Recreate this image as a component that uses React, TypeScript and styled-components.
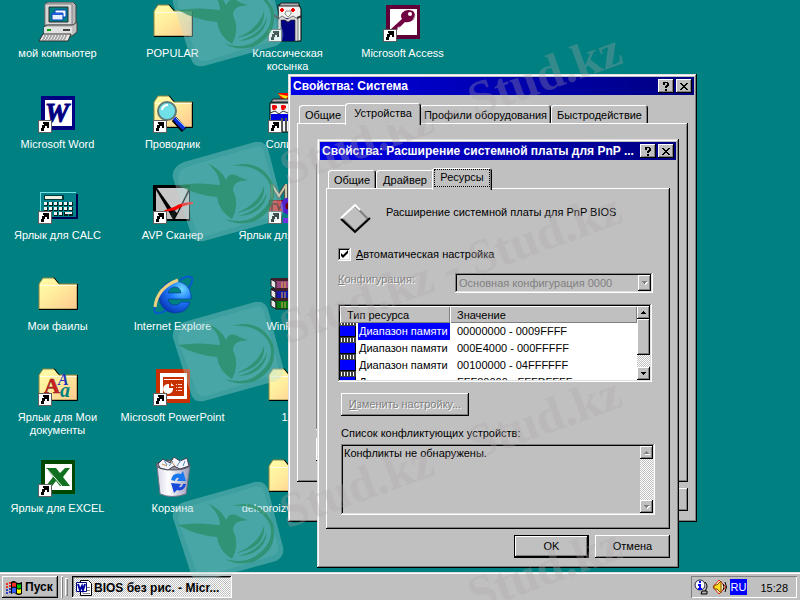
import React from "react";
import styled, { createGlobalStyle, css } from "styled-components";

const GlobalStyle = createGlobalStyle`
  * { box-sizing: border-box; }
  html, body { margin: 0; padding: 0; }
  body {
    background: #008080;
    font-family: "Liberation Sans", Arial, sans-serif;
    font-size: 11px;
    line-height: 13px;
    color: #000;
    overflow: hidden;
  }
  button, input, select, textarea { font: inherit; color: inherit; margin: 0; }
`;

const raised = css`
  box-shadow: inset -1px -1px #000, inset 1px 1px #fff, inset -2px -2px #808080;
`;
const sunken = css`
  box-shadow: inset -1px -1px #fff, inset 1px 1px #808080, inset -2px -2px #dfdfdf, inset 2px 2px #000;
`;
const dither = css`
  background: repeating-conic-gradient(#fff 0 25%, #c0c0c0 0 50%) 0 0 / 2px 2px;
`;

const Screen = styled.div`
  position: relative;
  min-height: 100vh;
  display: flex;
  flex-direction: column;
  overflow: hidden;
`;

const Workspace = styled.main`
  position: relative;
  flex: 1;
`;

const IconGrid = styled.div`
  display: grid;
  grid-template-columns: repeat(4, 115px);
  grid-template-rows: repeat(6, 91px);
  grid-auto-flow: column;
`;

const Shortcut = styled.button`
  display: flex;
  flex-direction: column;
  align-items: center;
  gap: 5px;
  padding: 2px 4px 0;
  border: 0;
  background: none;
  color: #fff;
  svg { display: block; flex: none; }
`;

const ShortcutLabel = styled.span<{ $narrow?: boolean }>`
  max-width: ${(p) => (p.$narrow ? "90px" : "none")};
  white-space: ${(p) => (p.$narrow ? "normal" : "nowrap")};
`;

const Window = styled.section<{ $x: number; $y: number; $w: number; $h: number }>`
  position: absolute;
  left: ${(p) => p.$x}px;
  top: ${(p) => p.$y}px;
  width: ${(p) => p.$w}px;
  height: ${(p) => p.$h}px;
  display: flex;
  flex-direction: column;
  padding: 3px;
  background: #c0c0c0;
  box-shadow: inset -1px -1px #000, inset 1px 1px #dfdfdf, inset -2px -2px #808080, inset 2px 2px #fff;
`;

const TitleBar = styled.header`
  display: flex;
  align-items: center;
  height: 18px;
  flex: none;
  padding: 0 2px;
  background: linear-gradient(90deg, #0000e6, #000080);
  color: #fff;
`;

const Title = styled.h1`
  flex: 1;
  min-width: 0;
  margin: 0;
  font-size: 12px;
  line-height: 18px;
  font-weight: bold;
  white-space: nowrap;
  overflow: hidden;
`;

const CaptionButton = styled.button`
  display: flex;
  align-items: center;
  justify-content: center;
  width: 16px;
  height: 14px;
  padding: 0;
  margin-left: 2px;
  border: 0;
  background: #c0c0c0;
  ${raised}
`;

const WindowBody = styled.div`
  flex: 1;
  display: flex;
  flex-direction: column;
  padding: 8px 6px;
`;

const TabList = styled.div`
  display: flex;
  align-items: flex-end;
  height: 20px;
  flex: none;
  padding-left: 2px;
`;

const Tab = styled.button<{ $active?: boolean; $w: number }>`
  position: relative;
  width: ${(p) => p.$w}px;
  height: ${(p) => (p.$active ? 22 : 18)}px;
  margin: ${(p) => (p.$active ? "0 -1px -2px -2px" : "0")};
  z-index: ${(p) => (p.$active ? 1 : 0)};
  padding: ${(p) => (p.$active ? "0 2px 2px" : "2px 0 0")};
  border: 0;
  border-radius: 3px 3px 0 0;
  white-space: nowrap;
  background: #c0c0c0;
  box-shadow: inset 1px 1px #fff, inset -1px 0 #000, inset -2px 0 #808080;
`;

const FocusText = styled.span`
  display: block;
  padding: 1px 0 2px;
  border: 1px dotted #000;
`;

const Panel = styled.div`
  flex: 1;
  display: flex;
  flex-direction: column;
  gap: 11px;
  padding: 16px 17px 14px 12px;
  ${raised}
`;

const BackPanel = styled(Panel)`
  gap: 8px;
  padding: 41px 18px 21px 19px;
`;

const DeviceList = styled.div`
  flex: 1;
  background: #fff;
  ${sunken}
`;

const ButtonRow = styled.div`
  display: flex;
  flex: none;
  justify-content: flex-end;
  gap: 6px;
  padding-top: 6px;
`;

const PushButton = styled.button<{ $default?: boolean; $w?: number }>`
  width: ${(p) => p.$w ?? 75}px;
  height: 23px;
  padding: 0;
  border: ${(p) => (p.$default ? "1px solid #000" : "0")};
  background: #c0c0c0;
  ${raised}
  &:disabled { color: #808080; text-shadow: 1px 1px #fff; }
`;

const DeviceHeader = styled.div`
  display: flex;
  height: 32px;
  gap: 15px;
  padding-left: 2px;
  svg { flex: none; }
`;

const DeviceName = styled.p`
  margin: 2px 0 0;
`;

const CheckRow = styled.label`
  display: flex;
  align-items: center;
  height: 15px;
  gap: 5px;
`;

const CheckBox = styled.input`
  appearance: none;
  width: 13px;
  height: 13px;
  background: #fff;
  ${sunken}
  &:checked {
    background: #fff url("data:image/svg+xml,%3Csvg xmlns='http://www.w3.org/2000/svg' width='13' height='13'%3E%3Cpath d='M3 5v3l2 2 5-5V2L5 7z' fill='%23000'/%3E%3C/svg%3E");
  }
`;

const Key = styled.u`
  text-underline-offset: 1px;
`;

const ConfigRow = styled.div`
  display: flex;
  justify-content: space-between;
  height: 20px;
`;

const DisabledLabel = styled.label`
  color: #808080;
  text-shadow: 1px 1px #fff;
`;

const SelectFrame = styled.div`
  display: flex;
  width: 198px;
  padding: 2px;
  ${sunken}
`;

const Select = styled.select`
  appearance: none;
  flex: 1;
  min-width: 0;
  padding: 0 2px;
  border: 0;
  background: none;
  color: #808080;
  &:disabled { opacity: 1; }
`;

const ArrowBox = styled.span<{ $h?: number }>`
  display: flex;
  align-items: center;
  justify-content: center;
  flex: none;
  width: 13px;
  height: ${(p) => (p.$h ? `${p.$h}px` : "auto")};
  background: #c0c0c0;
  ${raised}
`;

const ListFrame = styled.div<{ $h: number; $plain?: boolean }>`
  display: flex;
  height: ${(p) => p.$h}px;
  margin-right: ${(p) => (p.$plain ? "-2px" : "1px")};
  margin-left: ${(p) => (p.$plain ? "3px" : "0")};
  padding: 2px;
  background: ${(p) => (p.$plain ? "#c0c0c0" : "#fff")};
  ${sunken}
`;

const TableClip = styled.div`
  flex: 1;
  overflow: hidden;
`;

const Table = styled.table`
  width: 100%;
  border-collapse: collapse;
  table-layout: fixed;
`;

const HeadCell = styled.th<{ $w?: number }>`
  width: ${(p) => (p.$w ? `${p.$w}px` : "auto")};
  height: 17px;
  padding: 1px 7px 0;
  font-weight: normal;
  text-align: left;
  background: #c0c0c0;
  box-shadow: inset 1px 1px #fff, inset -1px -1px #808080;
`;

const Cell = styled.td`
  height: 17px;
  padding: 0 7px;
  white-space: nowrap;
`;

const TypeCell = styled.td`
  height: 17px;
  padding: 0;
  white-space: nowrap;
`;

const TypeContent = styled.div<{ $selected?: boolean }>`
  display: flex;
  height: 17px;
  line-height: 17px;
  gap: 1px;
  overflow: hidden;
  svg { flex: none; }
  span {
    flex: 1;
    padding-left: 1px;
    background: ${(p) => (p.$selected ? "#0000ff" : "transparent")};
    color: ${(p) => (p.$selected ? "#fff" : "#000")};
  }
`;

const ScrollTrack = styled.div`
  display: flex;
  flex-direction: column;
  width: 13px;
  flex: none;
  ${dither}
`;

const ScrollThumb = styled.div`
  height: 36px;
  background: #c0c0c0;
  ${raised}
`;

const Spacer = styled.div`
  flex: 1;
`;

const ConflictField = styled.div`
  display: flex;
  flex-direction: column;
  gap: 4px;
  label { padding-left: 3px; }
`;

const Conflicts = styled.textarea`
  flex: 1;
  padding: 1px;
  border: 0;
  resize: none;
  overflow: hidden;
  background: transparent;
`;

const ChangeButton = styled(PushButton)`
  margin-left: 3px;
`;

const Taskbar = styled.footer`
  display: flex;
  flex: none;
  height: 28px;
  padding: 4px 3px 2px 2px;
  background: #c0c0c0;
  box-shadow: inset 0 1px #dfdfdf, inset 0 2px #fff;
`;

const StartButton = styled.button`
  display: flex;
  align-items: center;
  gap: 2px;
  width: 56px;
  height: 22px;
  padding: 1px 4px 0;
  border: 0;
  background: #c0c0c0;
  font-size: 12px;
  font-weight: bold;
  ${raised}
`;

const Grip = styled.span<{ $wide?: boolean }>`
  width: ${(p) => (p.$wide ? 3 : 2)}px;
  height: ${(p) => (p.$wide ? 18 : 22)}px;
  margin: ${(p) => (p.$wide ? "2px 4px 0 2px" : "0 0 0 3px")};
  background: ${(p) => (p.$wide ? "#c0c0c0" : "#808080")};
  box-shadow: inset 1px 1px #fff, inset -1px -1px #808080;
`;

const TaskButton = styled.button`
  display: flex;
  align-items: center;
  gap: 2px;
  width: 160px;
  height: 22px;
  padding: 2px 4px 0;
  border: 0;
  font-size: 12px;
  font-weight: bold;
  white-space: nowrap;
  ${dither}
  box-shadow: inset -1px -1px #fff, inset 1px 1px #000, inset -2px -2px #dfdfdf, inset 2px 2px #808080;
`;

const Tray = styled.div`
  display: flex;
  align-items: center;
  gap: 2px;
  width: 106px;
  height: 22px;
  margin-left: auto;
  padding: 0 9px 0 3px;
  box-shadow: inset 1px 1px #808080, inset -1px -1px #fff;
`;

const Lang = styled.span`
  width: 17px;
  height: 16px;
  line-height: 16px;
  text-align: center;
  background: #0000ff;
  color: #fff;
`;

const Clock = styled.time`
  margin-left: auto;
  padding-top: 2px;
`;

const Watermark = styled.div`
  position: absolute;
  inset: 0;
  overflow: hidden;
  pointer-events: none;
`;

const Stamp = styled.svg<{ $y: number }>`
  position: absolute;
  left: 170px;
  top: ${(p) => p.$y}px;
`;

const StampText = styled.span<{ $x: number; $y: number }>`
  position: absolute;
  left: ${(p) => p.$x}px;
  top: ${(p) => p.$y}px;
  font: bold 49px/49px "Liberation Serif", serif;
  white-space: nowrap;
  color: rgba(176, 164, 168, 0.3);
  transform: rotate(-20deg);
  transform-origin: 0 100%;
`;

/* ---------- icons ---------- */

const Svg = ({ children }: { children: React.ReactNode }) => (
  <svg width="40" height="40" viewBox="0 0 40 40" aria-hidden="true">{children}</svg>
);

const LinkArrow = () => (
  <g shapeRendering="crispEdges">
    <path d="M0 27h14v13H0z" fill="#606060" />
    <path d="M1 28h12v11H1z" fill="#fff" />
    <path d="M5 29h6v6H9v-2H7v2H6v3H3v-3h1v-3h2v-1H5z" fill="#000" />
  </g>
);

const FolderShape = () => (
  <g>
    <path d="M1 9L5 3h11l5 6h18v25H1z" fill="url(#folder)" stroke="#8c8440" />
    <path d="M2 10.500h37" stroke="#fff" opacity=".7" />
    <path d="M39.500 9v25.500H1" fill="none" stroke="#000" />
    <path d="M16 2.500l5 6" stroke="#000" />
  </g>
);

const Defs = () => (
  <svg width="0" height="0" aria-hidden="true">
    <defs>
      <linearGradient id="folder" x1="0" y1="0" x2="1" y2="1">
        <stop offset="0" stopColor="#ffffa8" />
        <stop offset=".45" stopColor="#ffec9c" />
        <stop offset="1" stopColor="#ffc890" />
      </linearGradient>
      <radialGradient id="ie" cx=".7" cy=".25" r=".8">
        <stop offset="0" stopColor="#70d8ff" />
        <stop offset=".45" stopColor="#2080ff" />
        <stop offset="1" stopColor="#0838b8" />
      </radialGradient>
      <linearGradient id="bin" x1="0" x2="1">
        <stop offset="0" stopColor="#d8d8e8" />
        <stop offset=".35" stopColor="#fff" />
        <stop offset="1" stopColor="#9898b8" />
      </linearGradient>
    </defs>
  </svg>
);

const Computer = () => (
  <Svg>
    <path d="M7 3l2-3h26l3 3v18l-3 3H7z" fill="#b8b8b8" stroke="#404040" />
    <path d="M7 2h27v21H7z" fill="#d8d8d8" stroke="#808080" />
    <path d="M11 5h19v15H11z" fill="#008080" stroke="#303030" />
    <path d="M17 8h11v7H17z" fill="#fff" stroke="#0040c0" />
    <path d="M14 11h11v7H14z" fill="#e8f0ff" stroke="#0040c0" />
    <path d="M14 11h11v2H14z" fill="#2060e0" />
    <path d="M6 25l3-2h26l4-3v10l-5 4H6z" fill="#c0c0c0" stroke="#404040" />
    <path d="M6 25h28v7H6z" fill="#e0e0e0" />
    <path d="M9 28h4" stroke="#00a000" strokeWidth="2" />
    <path d="M25 28h7" stroke="#404040" strokeWidth="2" />
    <path d="M5 32h28l-3 7H1z" fill="#e8e8e8" stroke="#303030" />
    <path d="M6 34h24M5 36h24M4 38h24" stroke="#707070" strokeDasharray="2 1" />
  </Svg>
);

const Folder = () => <Svg><FolderShape /></Svg>;

const Word = () => (
  <Svg>
    <path d="M3 3h34v34H3z" fill="#000080" />
    <path d="M7 7h27v26H7z" fill="#fff" />
    <text x="7" y="29" fontFamily="Liberation Serif, serif" fontWeight="bold" fontStyle="italic" fontSize="27" fill="#000080" stroke="#000080">W</text>
    <LinkArrow />
  </Svg>
);

const Explorer = () => (
  <Svg>
    <FolderShape />
    <path d="M21 26l10 11" stroke="#000" strokeWidth="6" />
    <path d="M21 25l10 11" stroke="#1030e0" strokeWidth="4" />
    <path d="M23 25l9 9" stroke="#80c0ff" />
    <circle cx="14" cy="18" r="9" fill="#70e0e8" stroke="#607878" strokeWidth="2" />
    <path d="M9 17q1-5 6-5" fill="none" stroke="#fff" strokeWidth="2" />
    <LinkArrow />
  </Svg>
);

const Calc = () => (
  <Svg>
    <g shapeRendering="crispEdges">
      <path d="M4 10h36v25H4z" fill="#000050" />
      <path d="M2 8h36v25H2z" fill="#70e0e0" />
      <path d="M3 9h35v24H3z" fill="#008088" />
      <path d="M6 11h20v5H6z" fill="#003838" />
      <path d="M7 12h17v3H7z" fill="#f0f0e0" />
      <g fill="none" stroke="#002020" strokeWidth="4" strokeDasharray="4 1"><path d="M6 20h29M6 25h29M16 30h19" /></g>
      <g fill="none" stroke="#f0f0f0" strokeWidth="3" strokeDasharray="3 2"><path d="M6 19h29M6 24h29M16 29h8" /></g>
      <path d="M27 28h7v2h-7z" fill="#f0f0f0" />
    </g>
    <LinkArrow />
  </Svg>
);

const Antivirus = () => (
  <Svg>
    <path d="M0 1h37v36H0z" fill="#000" />
    <path d="M4 4h32L24 29l-5-4z" fill="#c8c8c8" />
    <path d="M3 6v29h17z" fill="#c0c0c0" />
    <path d="M22 35L36 8v27z" fill="#c0c0c0" />
    <path d="M17 30l5-5 1 6-3 4z" fill="#101818" />
    <path d="M12 26l9-3q8-5 19-5v2q-10 1-17 6l-13 2z" fill="#ff0000" />
    <LinkArrow />
  </Svg>
);

const Explore = () => (
  <Svg>
    <path d="M27 5q9-6 12-2 1 4-4 11" fill="none" stroke="#0858d0" strokeWidth="2" />
    <path d="M5 24q-6 12-2 14 4 1 11-3" fill="none" stroke="#0858d0" strokeWidth="2" />
    <path d="M38 24H15q1 6 7 6 4 0 6-3h9q-3 11-15 11A16 16 0 1 1 38 20zM15 18h13q-1-6-6-6t-7 6z" fillRule="evenodd" fill="url(#ie)" stroke="#083098" strokeWidth=".6" />
    <path d="M2 32Q4 13 25 5" fill="none" stroke="#ecd080" strokeWidth="3" />
  </Svg>
);

const Documents = () => (
  <Svg>
    <FolderShape />
    <g fontFamily="Liberation Serif, serif" fontWeight="bold">
      <text x="20" y="19" fontSize="16" fontStyle="italic" fill="#2038c0">A</text>
      <text x="6" y="27" fontSize="22" fill="#d02020" stroke="#802020" strokeWidth=".5">A</text>
      <text x="22" y="31" fontSize="20" fontStyle="italic" fill="#008080">a</text>
    </g>
    <LinkArrow />
  </Svg>
);

const Slides = () => (
  <Svg>
    <path d="M3 3h34v34H3z" fill="#c83000" />
    <path d="M7 7h27v26H7z" fill="#fff" />
    <path d="M10 11h21v19H10z" fill="#c83000" />
    <path d="M11 13.500h19" stroke="#fff" />
    <path d="M16 18v4h4a5 5 0 1 1-4-4z" fill="#fff" />
    <path d="M18 17v3h3z" fill="#fff" />
    <path d="M23 18.500h6M23 21.500h6M23 24.500h6" stroke="#ffd0c0" strokeDasharray="1 1 4" />
    <LinkArrow />
  </Svg>
);

const Sheet = () => (
  <Svg>
    <path d="M3 3h34v34H3z" fill="#004800" />
    <path d="M7 7h27v26H7z" fill="#fff" />
    <path d="M8 11h10l4 5 5-5h5l-7 9 7 9H22l-4-5-4 5H8l7-9z" fill="#107020" />
    <path d="M9 12l15 17" stroke="#fff" strokeWidth="1" />
    <LinkArrow />
  </Svg>
);

const Bin = () => (
  <Svg>
    <path d="M4 9l3 28q12 5 26 0l4-28z" fill="url(#bin)" stroke="#707088" />
    <ellipse cx="20" cy="8" rx="17" ry="5" fill="#9090a0" stroke="#505060" />
    <path d="M5 7l5-5 7 4 4-6 6 4 7-3 2 8-9 3-6-3-6 4-8-2z" fill="#f4f4ff" stroke="#404050" />
    <path d="M11 3l3 5M20 4l-4 5M28 3l-4 6M32 4l-2 5" stroke="#5090c0" />
    <path d="M18 4l4 5M9 7l5 2" stroke="#c09040" />
    <path d="M18 23q2-8 10-6l2-3 3 10h-9l2-3q-3-1-4 3z" fill="#1878f0" />
    <path d="M33 27q-2 8-9 6l-3 3-3-10 10 1-2 3q3 1 4-3z" fill="#1848d8" />
  </Svg>
);

const Cards = () => (
  <Svg>
    <path d="M10 3h21l2 4v32H11z" fill="#f0f0f0" stroke="#000" />
    <path d="M13 1h18v3H11z" fill="#b0b0b8" stroke="#202020" />
    <path d="M13 16h14v23H13z" fill="#000080" />
    <path d="M10 17l4-3 5 3 6-3 5 3v22h-3V18h-4l-3 2-3-2h-4v21h-3z" fill="#d8d8d8" stroke="#303030" strokeWidth=".6" />
    <path d="M14 6v4M12 8h4M25 6v4M23 8h4" stroke="#f00000" strokeWidth="2" />
    <path d="M17 12l3 3 3-3v-3h-5z" fill="#f4f4f4" stroke="#909090" />
    <path d="M6 13l5 4M29 16l5-2" stroke="#303030" strokeWidth="2" />
    <LinkArrow />
  </Svg>
);

const Joker = () => (
  <Svg>
    <path d="M10 0h20v8H14z" fill="#f00" />
    <path d="M10 1l10 2-2 4z" fill="#ffe000" />
    <path d="M2 10h20v29H2z" fill="#f4f4f4" stroke="#000" />
    <path d="M5 6h17v3H3z" fill="#b0b0b8" stroke="#202020" />
    <path d="M3 21h17v7H3z" fill="#0000e0" />
    <path d="M6 12v5M4 14h5M15 12v5M13 14h5" stroke="#f00000" strokeWidth="3" />
    <path d="M14 25v14M18 25v14" stroke="#505050" strokeWidth="2" />
    <path d="M2 20l5-2 4 3 4-3 5 2" fill="none" stroke="#303030" />
    <LinkArrow />
  </Svg>
);

const Mine = () => (
  <Svg>
    <path d="M4 15V1l7 11 7-11v14" fill="none" stroke="#505050" strokeWidth="4" />
    <path d="M4 15V1l7 11 7-11v14" fill="none" stroke="#c8c8a8" strokeWidth="2" />
    <path d="M1 16h20v11H1z" fill="#700000" />
    <path d="M2 17h12v10H2z" fill="#e01818" />
    <path d="M4 27v-7h5l2 5 3-4" fill="none" stroke="#600000" strokeWidth="2" />
    <circle cx="21" cy="22" r="6" fill="none" stroke="#5020c8" strokeWidth="5" />
    <path d="M15 34h10v5H15z" fill="#7030e0" />
    <LinkArrow />
  </Svg>
);

const bookColours: [string, number][] = [["#984880", 3], ["#1818a8", 13], ["#087818", 23]];

const Books = () => (
  <Svg>
    {bookColours.map(([fill, y]) => (
      <g key={y} transform={`translate(0 ${y})`}>
        <path d="M3 1l5 3v7l-5-3z" fill="#e8e8e8" stroke="#202020" />
        <path d="M3 1h28l4 3v7H8V4z" fill={fill} stroke="#181818" />
        <path d="M3 0h27l3 3H8z" fill="#402028" />
        <path d="M14 4v6M17 4v6" stroke="#e0b040" />
      </g>
    ))}
  </Svg>
);

const AccessKey = () => (
  <Svg>
    <path d="M3 3h34v34H3z" fill="#600038" />
    <path d="M7 7h27v26H7z" fill="#fff" />
    <path d="M19 11q4-5 11-2 4 4 0 9-4 3-8 2l-5 5h-2l-1 3h-3l-2 3H8v-4l11-10q-2-3 0-6z" fill="#700040" />
    <path d="M22 20l-5 5h-2l-1 3M30 18l2-5" fill="none" stroke="#b088a0" />
    <circle cx="27" cy="12" r="2" fill="#fff" />
    <LinkArrow />
  </Svg>
);

const WinFlag = () => (
  <svg width="17" height="16" viewBox="0 0 17 16" aria-hidden="true">
    <path d="M5 2q3-2 5 0t6 0v12q-4 2-6 0t-5 0z" fill="#000" />
    <path d="M6 3q2-1 4 0v4q-2-1-4 0z" fill="#f03020" />
    <path d="M11 4q2 1 4 0v4q-2 1-4 0z" fill="#00c000" />
    <path d="M6 8q2-1 4 0v5q-2-1-4 0z" fill="#3060ff" />
    <path d="M11 9q2 1 4 0v4q-2 1-4 0z" fill="#ffff00" />
    <path d="M0 4h2M3 3h2M0 7h2M3 6h2" stroke="#f03020" strokeWidth="2" />
    <path d="M0 10h2M3 9h2M0 13h2M3 12h2" stroke="#3040c0" strokeWidth="2" />
  </svg>
);

const DocIcon = () => (
  <svg width="16" height="16" viewBox="0 0 16 16" aria-hidden="true">
    <path d="M4.500.5h8l3 3v12h-11z" fill="#fff" stroke="#000" />
    <path d="M11 7.500h3M11 10.500h3M7 13.500h7" stroke="#808080" />
    <path d="M.5 2.500h10v9H.5z" fill="#fff" stroke="#000080" />
    <path d="M2 4l2 6 2-4 1 4 2-6" fill="none" stroke="#0000a0" strokeWidth="2" />
  </svg>
);

const Question = () => (
  <svg width="8" height="9" viewBox="0 0 8 9" shapeRendering="crispEdges" aria-hidden="true">
    <path d="M1 0h5v1h1v3H6v1H5v1H3V4h1V3h1V1H3v2H1zM3 7h2v2H3z" />
  </svg>
);

const Cross = () => (
  <svg width="8" height="7" viewBox="0 0 8 7" shapeRendering="crispEdges" aria-hidden="true">
    <path d="M0 0h2v1h1v1h2V1h1V0h2v1H7v1H6v1H5v1h1v1h1v1h1v1H6V6H5V5H3v1H2v1H0V6h1V5h1V4h1V3H2V2H1V1H0z" />
  </svg>
);

const Arrow = ({ up, off }: { up?: boolean; off?: boolean }) => (
  <svg width="6" height="4" viewBox="0 0 6 4" shapeRendering="crispEdges" aria-hidden="true">
    {off && <path d={up ? "M3 1h1l2 3H1z" : "M1 1h5L4 4H3z"} fill="#fff" />}
    <path d={up ? "M2 0h1v1h1v1h1v1H0V2h1V1h1z" : "M0 0h5v1H4v1H3v1H2V2H1V1H0z"} fill={off ? "#808080" : "#000"} />
  </svg>
);

const Diamond = () => (
  <svg width="31" height="31" viewBox="0 0 31 31" aria-hidden="true">
    <path d="M15 1L29 15 15 28 1 14z" fill="#c0c0c0" />
    <path d="M15 2l13 13-13 12L3 15" fill="none" stroke="#808080" strokeWidth="2" />
    <path d="M1 15l14 13 15-14" fill="none" stroke="#000" strokeWidth="2" />
    <path d="M1 14L15 1l5 5" fill="none" stroke="#fff" strokeWidth="2" />
  </svg>
);

const Chip = () => (
  <svg width="17" height="17" viewBox="0 0 17 17" shapeRendering="crispEdges" aria-hidden="true">
    <path d="M0 0h16v3H0zM0 14h16v3H0z" fill="#404040" />
    <path d="M1 1h15M1 16h15" stroke="#fff" strokeWidth="2" strokeDasharray="1 2" />
    <path d="M0 3h16v11H0z" fill="#000" />
    <path d="M0 3h15v10H0z" fill="#0000ff" />
  </svg>
);

const Bulb = () => (
  <svg width="16" height="16" viewBox="0 0 16 16" aria-hidden="true">
    <circle cx="6" cy="6" r="5" fill="#fff" stroke="#202040" />
    <path d="M6 2v2M6 5v5M4 6h2M4 10h4" stroke="#0000ff" strokeWidth="2" />
    <path d="M11 3q4 4 0 9M8 12h5v3H7z" fill="#b0b0b0" stroke="#000" />
  </svg>
);

const Speaker = () => (
  <svg width="16" height="16" viewBox="0 0 16 16" aria-hidden="true">
    <path d="M7 1l7 7-7 7-6-7z" fill="#fff0c0" stroke="#e02010" />
    <path d="M2 6h3l4-4v12l-4-4H2z" fill="#ffe020" stroke="#804000" />
    <path d="M11 5q2 3 0 6M13 3q3 5 0 10" fill="none" stroke="#000" />
  </svg>
);

const Bird = ({ y }: { y: number }) => (
  <Stamp $y={y} width="116" height="104" viewBox="0 0 116 104" aria-hidden="true">
    <path d="M14 20L85 0q9-2 13 7l15 58q2 9-7 14L34 99q-10 2-13-7L3 36q-2-11 11-16z" fill="#b4dcdc" fillOpacity=".34" />
    <path d="M17 25L84 5q8-2 10 5l14 54q1 7-6 10L36 94q-8 1-10-6L8 38q-1-9 9-13z" fill="#a8e0e0" fillOpacity=".12" />
    <g fill="#288c64" fillOpacity=".75">
      <path d="M8 43q22-3 40 0 2 1 2-2-2-12-13-20 14 6 19 17 3-7 10-5 4 3 12 5l-7 1q-8 2-8 9 7 14-1 29-13-8-15-22-22-2-39-12z" />
      <path d="M62 24q29-8 41 18 6 26-20 38-16 4-28-3 17 5 29-2 21-13 16-32-9-21-38-19z" />
      <path d="M94 44q2 22-28 27 22-8 28-27z" />
      <path d="M97 50q-2 22-28 24 22-6 28-24z" />
    </g>
  </Stamp>
);

const shortcuts: [string, React.FC, boolean?][] = [
  ["мой компьютер", Computer],
  ["Microsoft Word", Word],
  ["Ярлык для CALC", Calc],
  ["Мои фаилы", Folder],
  ["Ярлык для Мои документы", Documents, true],
  ["Ярлык для EXCEL", Sheet],
  ["POPULAR", Folder],
  ["Проводник", Explorer],
  ["AVP Сканер", Antivirus],
  ["Internet Explore", Explore],
  ["Microsoft PowerPoint", Slides],
  ["Корзина", Bin],
  ["Классическая косынка", Cards, true],
  ["Солитер", Joker],
  ["Ярлык для MSDOS", Mine],
  ["WinRAR", Books],
  ["12", Folder],
  ["deloproizvodstvo 1", Folder],
  ["Microsoft Access", AccessKey],
];

const ranges = [
  "00000000 - 0009FFFF",
  "000E4000 - 000FFFFF",
  "00100000 - 04FFFFFF",
  "FFF80000 - FFFDFFFF",
];

const Caption = ({ children }: { children: React.ReactNode }) => (
  <TitleBar>
    <Title>{children}</Title>
    <CaptionButton aria-label="Справка"><Question /></CaptionButton>
    <CaptionButton aria-label="Закрыть"><Cross /></CaptionButton>
  </TitleBar>
);

export default function App() {
  return (
    <Screen>
      <GlobalStyle />
      <Workspace>
        <IconGrid>
          {shortcuts.map(([label, Icon, narrow]) => (
            <Shortcut key={label}>
              <Icon />
              <ShortcutLabel $narrow={narrow}>{label}</ShortcutLabel>
            </Shortcut>
          ))}
        </IconGrid>

        <Window $x={288} $y={74} $w={409} $h={448}>
          <Caption>Свойства: Система</Caption>
          <WindowBody>
            <TabList role="tablist">
              <Tab role="tab" $w={48}>Общие</Tab>
              <Tab role="tab" $w={76} $active aria-selected>Устройства</Tab>
              <Tab role="tab" $w={131}>Профили оборудования</Tab>
              <Tab role="tab" $w={97}>Быстродействие</Tab>
            </TabList>
            <BackPanel>
              <DeviceList />
              <PushButton aria-label="Свойства" />
            </BackPanel>
            <ButtonRow>
              <PushButton aria-label="Отмена" />
            </ButtonRow>
          </WindowBody>
        </Window>

        <Window $x={317} $y={139} $w={362} $h={429}>
          <Caption>Свойства: Расширение системной платы для PnP ...</Caption>
          <WindowBody>
            <TabList role="tablist">
              <Tab role="tab" $w={48}>Общие</Tab>
              <Tab role="tab" $w={58}>Драйвер</Tab>
              <Tab role="tab" $w={60} $active aria-selected><FocusText>Ресурсы</FocusText></Tab>
            </TabList>
            <Panel>
              <DeviceHeader>
                <Diamond />
                <DeviceName>Расширение системной платы для PnP BIOS</DeviceName>
              </DeviceHeader>
              <CheckRow>
                <CheckBox type="checkbox" defaultChecked />
                <span><Key>А</Key>втоматическая настройка</span>
              </CheckRow>
              <ConfigRow>
                <DisabledLabel htmlFor="config"><Key>К</Key>онфигурация:</DisabledLabel>
                <SelectFrame>
                  <Select id="config" disabled>
                    <option>Основная конфигурация 0000</option>
                  </Select>
                  <ArrowBox><Arrow off /></ArrowBox>
                </SelectFrame>
              </ConfigRow>
              <ListFrame $h={78}>
                <TableClip>
                  <Table>
                    <thead>
                      <tr>
                        <HeadCell $w={110}>Тип ресурса</HeadCell>
                        <HeadCell>Значение</HeadCell>
                      </tr>
                    </thead>
                    <tbody>
                      {ranges.map((range, i) => (
                        <tr key={range}>
                          <TypeCell>
                            <TypeContent $selected={i === 0}><Chip /><span>Диапазон памяти</span></TypeContent>
                          </TypeCell>
                          <Cell>{range}</Cell>
                        </tr>
                      ))}
                    </tbody>
                  </Table>
                </TableClip>
                <ScrollTrack>
                  <ArrowBox $h={13}><Arrow up /></ArrowBox>
                  <ScrollThumb />
                  <Spacer />
                  <ArrowBox $h={13}><Arrow /></ArrowBox>
                </ScrollTrack>
              </ListFrame>
              <ChangeButton $w={128} disabled><Key>И</Key>зменить настройку...</ChangeButton>
              <ConflictField>
                <label htmlFor="conflicts">Список конфликтующих устройств:</label>
                <ListFrame $h={71} $plain>
                  <Conflicts id="conflicts" readOnly defaultValue="Конфликты не обнаружены." />
                  <ScrollTrack>
                    <ArrowBox $h={13}><Arrow up off /></ArrowBox>
                    <Spacer />
                    <ArrowBox $h={13}><Arrow off /></ArrowBox>
                  </ScrollTrack>
                </ListFrame>
              </ConflictField>
            </Panel>
            <ButtonRow>
              <PushButton $default>OK</PushButton>
              <PushButton>Отмена</PushButton>
            </ButtonRow>
          </WindowBody>
        </Window>
      </Workspace>

      <Taskbar>
        <StartButton><WinFlag />Пуск</StartButton>
        <Grip />
        <Grip $wide />
        <TaskButton><DocIcon />BIOS без рис. - Micr...</TaskButton>
        <Tray>
          <Bulb />
          <Speaker />
          <Lang>RU</Lang>
          <Clock>15:28</Clock>
        </Tray>
      </Taskbar>

      <Watermark aria-hidden="true">
        <Bird y={-33} />
        <Bird y={142} />
        <Bird y={302} />
        <Bird y={482} />
        <StampText $x={290} $y={144}>Stud.kz - Stud.kz</StampText>
        <StampText $x={290} $y={303}>Stud.kz - Stud.kz</StampText>
        <StampText $x={290} $y={487}>Stud.kz - Stud.kz</StampText>
        <StampText $x={478} $y={570}>Stud.kz</StampText>
      </Watermark>
      <Defs />
    </Screen>
  );
}
